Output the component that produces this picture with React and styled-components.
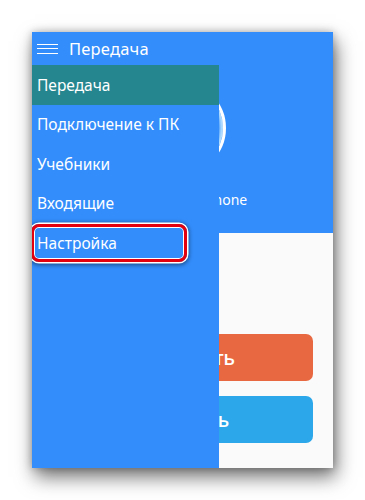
import React from "react";
import styled, { createGlobalStyle, css } from "styled-components";

const GlobalStyle = createGlobalStyle`
  html, body {
    margin: 0;
    padding: 0;
    background: #ffffff;
  }
  body {
    font-family: "Noto Sans", "Open Sans", "Liberation Sans", sans-serif;
  }
`;

const Page = styled.div`
  width: 365px;
  height: 500px;
  padding: 32px 0 0 32px;
  box-sizing: border-box;
  background: #ffffff;
`;

const Phone = styled.div`
  position: relative;
  width: 301px;
  height: 436px;
  display: flex;
  flex-direction: column;
  background: #fafafa;
  overflow: hidden;
  box-shadow: 3px 9px 18px rgba(0, 0, 0, 0.55), 0 0 8px rgba(0, 0, 0, 0.25);
`;

const Header = styled.header`
  height: 33px;
  flex-shrink: 0;
  display: flex;
  align-items: center;
  gap: 11px;
  padding-left: 5px;
  background: #338dfb;
  color: #fff;
`;

const Burger = styled.span`
  width: 21px;
  height: 10px;
  display: flex;
  flex-direction: column;
  justify-content: space-between;
  & > i {
    display: block;
    height: 1px;
    background: #fff;
  }
`;

const Title = styled.h1`
  margin: 0;
  font-size: 16.5px;
  font-weight: 400;
  letter-spacing: 0.2px;
`;

const Hero = styled.section`
  height: 168px;
  flex-shrink: 0;
  background: #338dfb;
  display: flex;
  flex-direction: column;
  align-items: center;
  padding-top: 17px;
  box-sizing: border-box;
  color: #fff;
`;

const Avatar = styled.div`
  width: 86px;
  height: 86px;
  border-radius: 50%;
  border: 3px solid #fff;
  box-shadow: inset -3px 0 3px rgba(200, 235, 255, 0.9);
  margin-left: -6px;
`;

const DeviceName = styled.div`
  margin-top: 16px;
  font-size: 14px;
`;

const Actions = styled.div`
  display: flex;
  flex-direction: column;
  gap: 15px;
  padding: 101px 20px 0 20px;
`;

const Action = styled.button`
  height: 47px;
  border: none;
  border-radius: 7px;
  color: #fff;
  font-family: "Open Sans", "Noto Sans", sans-serif;
  font-size: 19px;
  font-weight: 600;
  padding: 0;
  background: ${(p) => p.$color};
`;

const Drawer = styled.nav`
  position: absolute;
  left: 0;
  top: 33px;
  bottom: 0;
  width: 187px;
  background: #338dfb;
  display: flex;
  flex-direction: column;
`;

const MenuItem = styled.div`
  position: relative;
  height: 39.5px;
  display: flex;
  align-items: center;
  padding-left: 5px;
  color: #fff;
  font-size: 15.5px;
  ${(p) =>
    p.$active &&
    css`
      background: #25868f;
    `}
  ${(p) =>
    p.$marked &&
    css`
      &::after {
        content: "";
        position: absolute;
        left: -1px;
        top: 1px;
        width: 150px;
        height: 32px;
        border: 3px solid #e3000f;
        border-radius: 8px;
        box-shadow: 0 0 0 1.5px #fff, 0 1px 4px 1.5px rgba(0, 0, 0, 0.45),
          inset 0 0 0 1px #fff;
      }
    `}
`;

const items = [
  { label: "Передача", active: true },
  { label: "Подключение к ПК" },
  { label: "Учебники" },
  { label: "Входящие" },
  { label: "Настройка", marked: true },
];

export default function App() {
  return (
    <>
      <GlobalStyle />
      <Page>
        <Phone>
          <Header>
            <Burger>
              <i />
              <i />
              <i />
            </Burger>
            <Title>Передача</Title>
          </Header>
          <Hero>
            <Avatar />
            <DeviceName>Устройство: iPhone</DeviceName>
          </Hero>
          <Actions>
            <Action $color="#e86941">Отправить</Action>
            <Action $color="#2ca8ea">Получить</Action>
          </Actions>
          <Drawer>
            {items.map(({ label, active, marked }) => (
              <MenuItem key={label} $active={active} $marked={marked}>
                {label}
              </MenuItem>
            ))}
          </Drawer>
        </Phone>
      </Page>
    </>
  );
}
